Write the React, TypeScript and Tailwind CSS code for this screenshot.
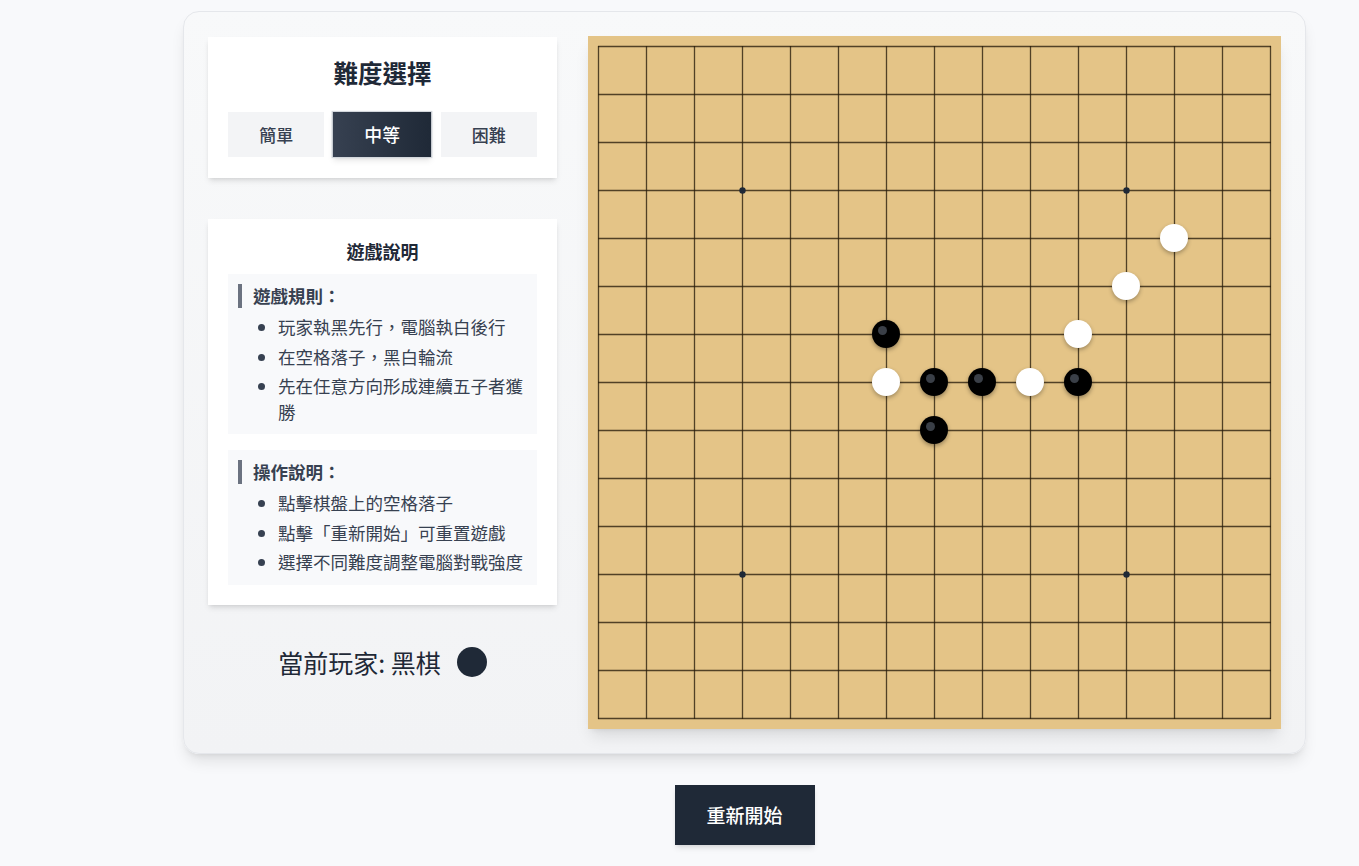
import React from "react";

const FONT = { fontFamily: '"Noto Sans CJK TC", "Noto Sans", sans-serif' };

const CELL = 48;
const N = 15;

type Stone = { c: number; r: number; color: "b" | "w" };
const stones: Stone[] = [
  { c: 6, r: 6, color: "b" },
  { c: 6, r: 7, color: "w" },
  { c: 7, r: 7, color: "b" },
  { c: 8, r: 7, color: "b" },
  { c: 9, r: 7, color: "w" },
  { c: 10, r: 7, color: "b" },
  { c: 7, r: 8, color: "b" },
  { c: 10, r: 6, color: "w" },
  { c: 11, r: 5, color: "w" },
  { c: 12, r: 4, color: "w" },
];

const stars = [
  [3, 3],
  [11, 3],
  [3, 11],
  [11, 11],
  [7, 7],
];

function Board() {
  const size = CELL * (N - 1) + 1;
  const lines = [];
  for (let i = 0; i < N; i++) {
    const p = i * CELL + 0.5;
    lines.push(<line key={"h" + i} x1={0} y1={p} x2={size} y2={p} stroke="rgba(40,28,10,0.78)" strokeWidth={1.3} />);
    lines.push(<line key={"v" + i} x1={p} y1={0} x2={p} y2={size} stroke="rgba(40,28,10,0.78)" strokeWidth={1.3} />);
  }
  return (
    <div className="bg-[#e4c487] p-[10px] shadow-lg">
      <div className="relative w-[673px] h-[673px]">
        <svg width={size} height={size} className="block overflow-visible">
          {lines}
          {stars.map(([c, r]) => (
            <circle key={`${c}-${r}`} cx={c * CELL + 0.5} cy={r * CELL + 0.5} r={3.2} fill="#1f2937" />
          ))}
        </svg>
        {stones.map((s) => (
          <div
            key={`${s.c}-${s.r}`}
            className={
              s.color === "b"
                ? "absolute w-[28px] h-[28px] -ml-[14px] -mt-[14px] rounded-full bg-black shadow-[0_2px_4px_rgba(0,0,0,0.35)]"
                : "absolute w-[28px] h-[28px] -ml-[14px] -mt-[14px] rounded-full bg-white shadow-[0_2px_4px_rgba(0,0,0,0.3)]"
            }
            style={{ left: s.c * CELL, top: s.r * CELL }}
          >
            {s.color === "b" && (
              <div className="absolute left-[6px] top-[6px] w-[9px] h-[9px] rounded-full bg-[#3a3f47]" />
            )}
          </div>
        ))}
      </div>
    </div>
  );
}

function Section({ title, items }: { title: string; items: string[] }) {
  return (
    <div className="bg-[#f8f9fb] p-[10px]">
      <div className="border-l-4 border-[#6b7280] pl-[11px] text-[17.5px] leading-[24px] font-bold text-[#374151]">
        {title}
      </div>
      <ul className="list-disc pl-[40px] mt-[6px] space-y-[4px] text-[17.5px] leading-[25.5px] text-[#374151] marker:text-[#374151]">
        {items.map((t) => (
          <li key={t}>{t}</li>
        ))}
      </ul>
    </div>
  );
}

export default function App() {
  return (
    <div className="min-h-screen bg-[#f8f9fb] pt-[11px] pb-[20px] pl-[130px] flex flex-col items-center" style={FONT}>
      <div className="flex gap-[31px] p-[24px] rounded-2xl border border-[#e5e7eb] bg-gradient-to-b from-[#f8f9fa] to-[#f2f3f5] shadow-lg">
        <div className="w-[349px] flex flex-col">
          <div className="bg-white shadow-md px-[20px] pt-[20px] pb-[21px] mt-[1px]">
            <h2 className="text-center text-[24.5px] leading-[32px] font-bold text-[#1f2937]">難度選擇</h2>
            <div className="grid grid-cols-3 gap-[10px] mt-[23px]">
              <button className="h-[45px] bg-[#f3f4f6] text-[17px] font-medium text-[#374151]">簡單</button>
              <button className="h-[45px] bg-gradient-to-r from-[#374151] to-[#1f2937] text-[17px] font-medium text-white shadow-md scale-105 border border-[#d1d5db]">
                中等
              </button>
              <button className="h-[45px] bg-[#f3f4f6] text-[17px] font-medium text-[#374151]">困難</button>
            </div>
          </div>

          <div className="bg-white shadow-md p-[20px] mt-[41px]">
            <h3 className="text-center text-[18px] leading-[24px] font-bold text-[#1f2937] mb-[11px]">遊戲說明</h3>
            <div className="flex flex-col gap-[16px]">
              <Section title="遊戲規則：" items={["玩家執黑先行，電腦執白後行", "在空格落子，黑白輪流", "先在任意方向形成連續五子者獲勝"]} />
              <Section title="操作說明：" items={["點擊棋盤上的空格落子", "點擊「重新開始」可重置遊戲", "選擇不同難度調整電腦對戰強度"]} />
            </div>
          </div>

          <div className="mt-[39px] flex items-center justify-center gap-[16px]">
            <span className="text-[25px] leading-[36px] font-normal text-[#1f2937]">當前玩家: 黑棋</span>
            <span className="w-[30px] h-[30px] rounded-full bg-[#1f2937]" />
          </div>
        </div>

        <Board />
      </div>

      <button className="mt-[31px] w-[140px] h-[60px] bg-[#1f2937] text-white text-[19px] font-medium shadow-md">
        重新開始
      </button>
    </div>
  );
}
